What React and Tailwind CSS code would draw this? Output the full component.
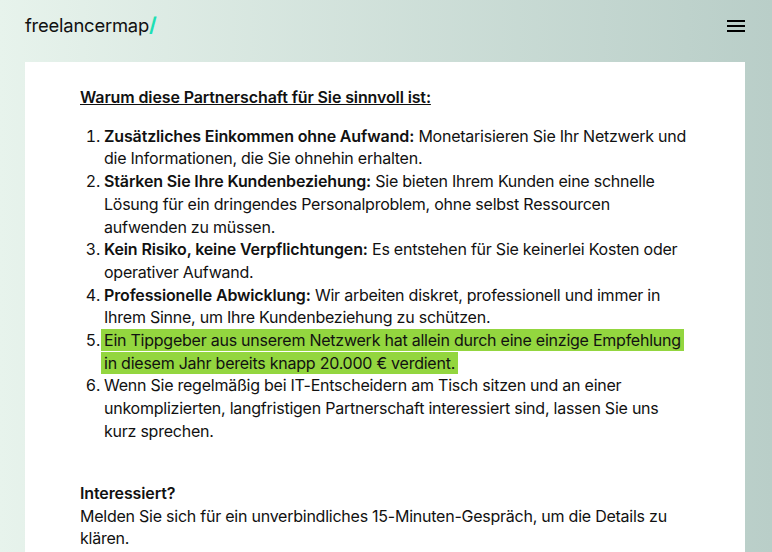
import React from "react";

const items = [
  { bold: "Zusätzliches Einkommen ohne Aufwand:", text: " Monetarisieren Sie Ihr Netzwerk und die Informationen, die Sie ohnehin erhalten." },
  { bold: "Stärken Sie Ihre Kundenbeziehung:", text: " Sie bieten Ihrem Kunden eine schnelle Lösung für ein dringendes Personalproblem, ohne selbst Ressourcen aufwenden zu müssen." },
  { bold: "Kein Risiko, keine Verpflichtungen:", text: " Es entstehen für Sie keinerlei Kosten oder operativer Aufwand." },
  { bold: "Professionelle Abwicklung:", text: " Wir arbeiten diskret, professionell und immer in Ihrem Sinne, um Ihre Kundenbeziehung zu schützen." },
];

export default function App() {
  return (
    <div className="h-[552px] overflow-hidden bg-gradient-to-r from-[#e7f3ec] to-[#b9cec8] font-['Inter',sans-serif] text-[#111]">
      <header className="flex items-center justify-between h-[62px] pl-[25px] pr-[27px] pb-[12px]">
        <div className="text-[18.4px] leading-none tracking-[-0.2px]">
          freelancermap<span className="text-[#1ee0b4] font-bold text-[20px]">/</span>
        </div>
        <div className="flex flex-col gap-[3px] w-[18px] mt-[2px]">
          <span className="h-[2px] bg-black" />
          <span className="h-[2px] bg-black" />
          <span className="h-[2px] bg-black" />
        </div>
      </header>
      <main className="mx-[25px] w-[720px] h-[600px] bg-white pl-[55px] pr-[55px] pt-[24px] text-[16px] leading-[22.7px] tracking-[-0.24px]">
        <p className="font-semibold underline mb-[16px] tracking-[-0.12px]">Warum diese Partnerschaft für Sie sinnvoll ist:</p>
        <ol className="list-decimal pl-[24px]">
          {items.map((item) => (
            <li key={item.bold}>
              <strong className="font-semibold tracking-[-0.14px]">{item.bold}</strong>
              {item.text}
            </li>
          ))}
          <li>
            <span className="bg-[#93d63f] px-[3px] -mx-[3px] py-[1px] box-decoration-clone">
              Ein Tippgeber aus unserem Netzwerk hat allein durch eine einzige Empfehlung in diesem Jahr bereits knapp 20.000 € verdient.
            </span>
          </li>
          <li>
            Wenn Sie regelmäßig bei IT-Entscheidern am Tisch sitzen und an einer unkomplizierten, langfristigen Partnerschaft interessiert sind, lassen Sie uns kurz sprechen.
          </li>
        </ol>
        <p className="font-semibold mt-[39.5px] tracking-[-0.12px]">Interessiert?</p>
        <p>Melden Sie sich für ein unverbindliches 15-Minuten-Gespräch, um die Details zu klären.</p>
      </main>
    </div>
  );
}
